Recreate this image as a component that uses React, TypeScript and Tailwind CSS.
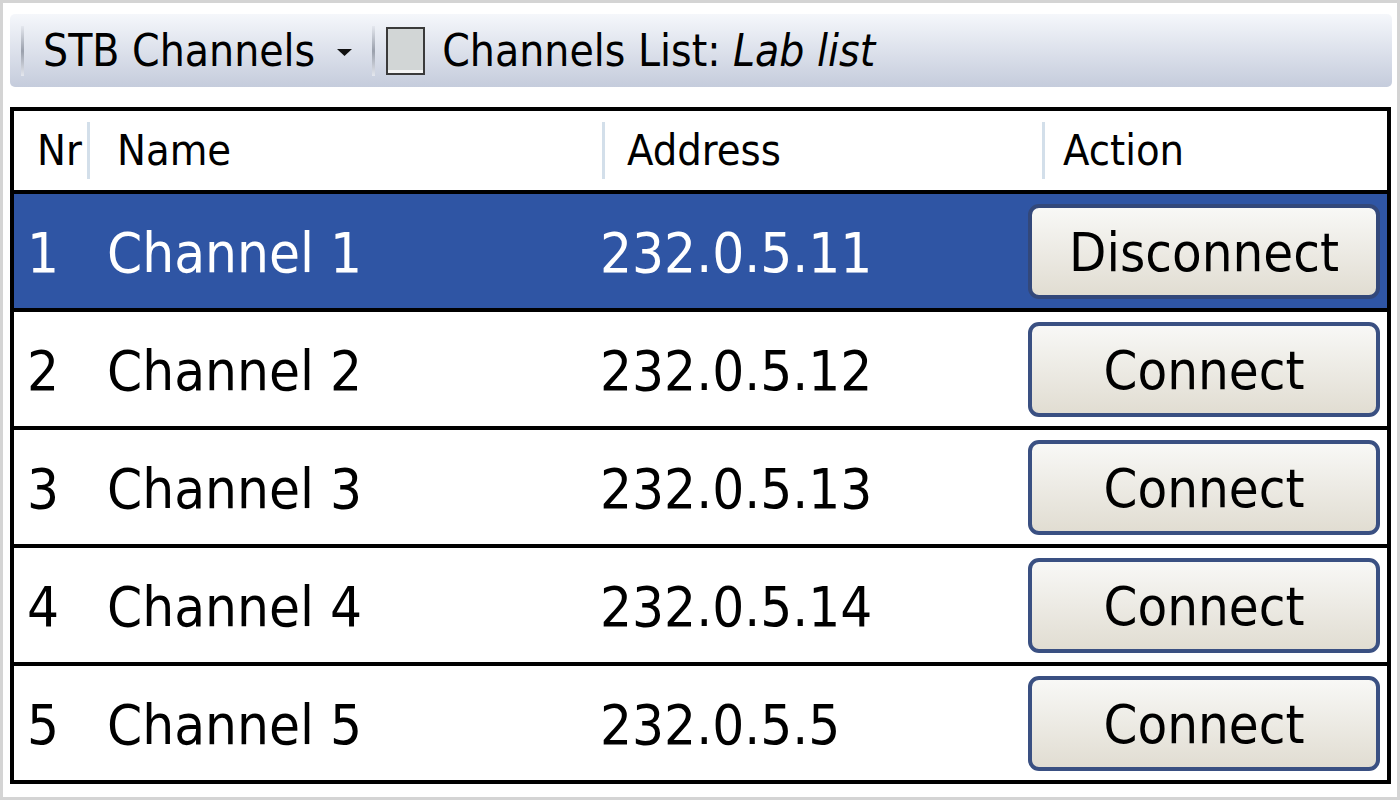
import React from "react";

const FONT = "font-['DejaVu_Sans_Condensed','DejaVu_Sans',Verdana,sans-serif] [font-stretch:condensed]";

type Channel = { nr: number; name: string; address: string; connected: boolean };

const channels: Channel[] = [
  { nr: 1, name: "Channel 1", address: "232.0.5.11", connected: true },
  { nr: 2, name: "Channel 2", address: "232.0.5.12", connected: false },
  { nr: 3, name: "Channel 3", address: "232.0.5.13", connected: false },
  { nr: 4, name: "Channel 4", address: "232.0.5.14", connected: false },
  { nr: 5, name: "Channel 5", address: "232.0.5.5", connected: false },
];

function Grip() {
  return <div className="h-[50px] w-[3px] bg-gradient-to-b from-[#e4e7ee] via-[#9aa0ac] to-[#e4e7ee]" />;
}

function HeaderSep() {
  return <div className="h-[57px] w-[3px] bg-[#d3dfea]" />;
}

function Toolbar() {
  return (
    <div className="flex h-[73px] items-center rounded-[5px] bg-gradient-to-b from-[#f5f7fb] to-[#c5ccdc] pl-[11px]">
      <Grip />
      <span className="ml-[19px] text-[44px] leading-none text-black">STB Channels</span>
      <svg className="ml-[22px] mt-[4px]" width="15" height="7" viewBox="0 0 15 7">
        <path d="M0 0 H15 L7.5 7 Z" fill="#111" />
      </svg>
      <div className="ml-[20px]">
        <Grip />
      </div>
      <div className="ml-[11px] flex h-[48px] w-[39px] flex-col border-2 border-[#3a3a3a] bg-[#d2d6d6]">
        <div className="mt-auto h-[3px] bg-[#f4f4f4]" />
      </div>
      <span className="ml-[17px] text-[44px] leading-none text-black">
        Channels List: <span className="italic">Lab list</span>
      </span>
    </div>
  );
}

function ActionButton({ label, selected }: { label: string; selected: boolean }) {
  return (
    <button
      className={`flex h-[95px] w-[352px] items-center justify-center rounded-[11px] border-[4px] bg-gradient-to-b from-[#f8f8f6] to-[#e1ddd2] pt-[3px] text-[54px] leading-none text-black ${
        selected ? "border-[#33487a]" : "border-[#3a5082]"
      }`}
    >
      {label}
    </button>
  );
}

function Row({ ch }: { ch: Channel }) {
  const sel = ch.connected;
  return (
    <div
      className={`grid h-[114px] grid-cols-[76px_512px_426px_1fr] items-center text-[56px] leading-none ${
        sel ? "bg-[#2f55a4] text-white" : "bg-white text-black"
      }`}
    >
      <div className="pl-[13px] pt-[4px]">{ch.nr}</div>
      <div className="pl-[17px] pt-[4px]">{ch.name}</div>
      <div className="-ml-[2px] pt-[4px]">{ch.address}</div>
      <div className="flex items-center">
        <ActionButton label={sel ? "Disconnect" : "Connect"} selected={sel} />
      </div>
    </div>
  );
}

export default function App() {
  return (
    <div className={`${FONT} flex h-[800px] w-[1400px] flex-col border-[3px] border-[#d4d4d4] bg-white pl-[7px] pr-[5px] pt-[11px]`}>
      <Toolbar />
      <div className="mt-[20px] mr-[1px] border-[4px] border-black">
        <div className="grid h-[79px] grid-cols-[76px_512px_440px_1fr] items-center text-[43px] leading-none text-black">
          <div className="flex items-center justify-between pl-[23px]">
            <span>Nr</span>
            <HeaderSep />
          </div>
          <div className="pl-[27px]">Name</div>
          <div className="flex items-center">
            <HeaderSep />
            <span className="ml-[22px]">Address</span>
          </div>
          <div className="flex items-center">
            <HeaderSep />
            <span className="ml-[18px]">Action</span>
          </div>
        </div>
        <div className="flex flex-col gap-[4px] border-t-[4px] border-black bg-black">
          {channels.map((ch) => (
            <Row key={ch.nr} ch={ch} />
          ))}
        </div>
      </div>
    </div>
  );
}
